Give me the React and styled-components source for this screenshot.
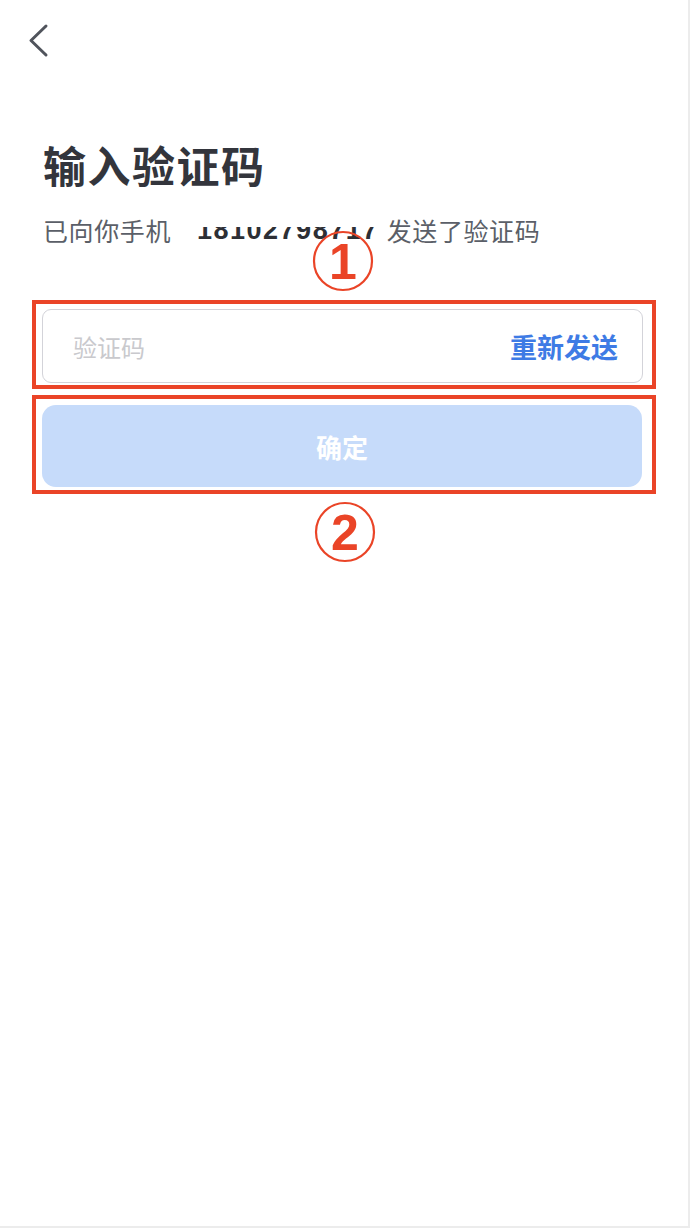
import React from "react";
import styled, { createGlobalStyle } from "styled-components";

const GlobalStyle = createGlobalStyle`
  html, body {
    margin: 0;
    padding: 0;
    background: #ececec;
  }
  * {
    box-sizing: border-box;
  }
`;

const Page = styled.div`
  width: 688px;
  height: 1226px;
  background: #ffffff;
  font-family: "Noto Sans CJK SC", "Noto Sans", sans-serif;
  display: flex;
  flex-direction: column;
`;

const Header = styled.div`
  height: 80px;
  padding: 23px 0 0 27px;
`;

const BackButton = styled.button`
  border: none;
  background: none;
  padding: 0;
  width: 24px;
  height: 36px;
  cursor: pointer;
  svg {
    display: block;
  }
`;

const Content = styled.div`
  padding: 0 32px 0 32px;
  display: flex;
  flex-direction: column;
`;

const Title = styled.h1`
  margin: 58px 0 0 11px;
  font-size: 43px;
  line-height: 52px;
  font-weight: 700;
  color: #33353c;
  letter-spacing: 1.5px;
`;

const Subtitle = styled.p`
  margin: 23px 0 0 11px;
  font-size: 25px;
  line-height: 34px;
  color: #5b5f68;
  display: flex;
  align-items: center;
  letter-spacing: 0.6px;
`;

const Phone = styled.span`
  position: relative;
  display: block;
  margin: 0 8px 0 26px;
  font-family: "Liberation Sans", Arial, sans-serif;
  font-weight: 700;
  font-size: 27px;
  line-height: 34px;
  letter-spacing: 1.5px;
  color: #2d2f35;
`;

const Mask = styled.span`
  position: absolute;
  z-index: 1;
  left: -4px;
  right: -2px;
  top: 0;
  height: 14px;
  background: #ffffff;
`;

const Annotated = styled.div`
  position: relative;
  border: 4px solid #ea4427;
  padding: ${(p) => p.$pad};
  margin-top: ${(p) => p.$top}px;
`;

const Marker = styled.svg`
  display: block;
  overflow: visible;
`;

const FloatMarker = styled.div`
  position: absolute;
  left: 276px;
  top: -74px;
`;

const FlowMarker = styled.div`
  display: flex;
  justify-content: center;
  margin-top: 7px;
  padding-left: 2px;
`;

const InputBox = styled.div`
  height: 74px;
  border: 1.5px solid #d3d3d9;
  border-radius: 9px;
  display: flex;
  align-items: center;
  justify-content: space-between;
  padding: 0 24px 0 28px;
`;

const CodeInput = styled.input`
  border: none;
  outline: none;
  background: transparent;
  font-family: inherit;
  font-size: 24px;
  color: #333;
  width: 200px;
  &::placeholder {
    color: #c9c9cd;
  }
`;

const Resend = styled.span`
  font-size: 27px;
  font-weight: 700;
  color: #3e7be5;
`;

const Confirm = styled.button`
  width: 100%;
  height: 82px;
  border: none;
  border-radius: 14px;
  background: #c6dbfa;
  color: #ffffff;
  font-family: inherit;
  font-size: 26px;
  font-weight: 700;
`;

const Circled = ({ n }) => (
  <Marker width="62" height="62" viewBox="0 0 62 62">
    <circle cx="31" cy="31" r="29" fill="none" stroke="#ea4427" strokeWidth="2.2" />
    <text
      x="31"
      y="49"
      textAnchor="middle"
      fontFamily="Liberation Sans, Arial, sans-serif"
      fontWeight="700"
      fontSize="50"
      fill="#ea4427"
    >
      {n}
    </text>
  </Marker>
);

export default function App() {
  return (
    <>
      <GlobalStyle />
      <Page>
        <Header>
          <BackButton aria-label="back">
            <svg width="24" height="36" viewBox="0 0 24 36">
              <path d="M19 3 L4 17.5 L19 32" fill="none" stroke="#50545c" strokeWidth="3" strokeLinecap="round" strokeLinejoin="round" />
            </svg>
          </BackButton>
        </Header>
        <Content>
          <Title>输入验证码</Title>
          <Subtitle>
            已向你手机
            <Phone>
              18102798717
              <Mask />
            </Phone>
            发送了验证码
          </Subtitle>
          <Annotated $top={53} $pad="5px 9px 2px 6px">
            <FloatMarker>
              <Circled n="1" />
            </FloatMarker>
            <InputBox>
              <CodeInput placeholder="验证码" />
              <Resend>重新发送</Resend>
            </InputBox>
          </Annotated>
          <Annotated $top={6} $pad="6px 10px 3px 6px">
            <Confirm>确定</Confirm>
          </Annotated>
          <FlowMarker>
            <Circled n="2" />
          </FlowMarker>
        </Content>
      </Page>
    </>
  );
}
